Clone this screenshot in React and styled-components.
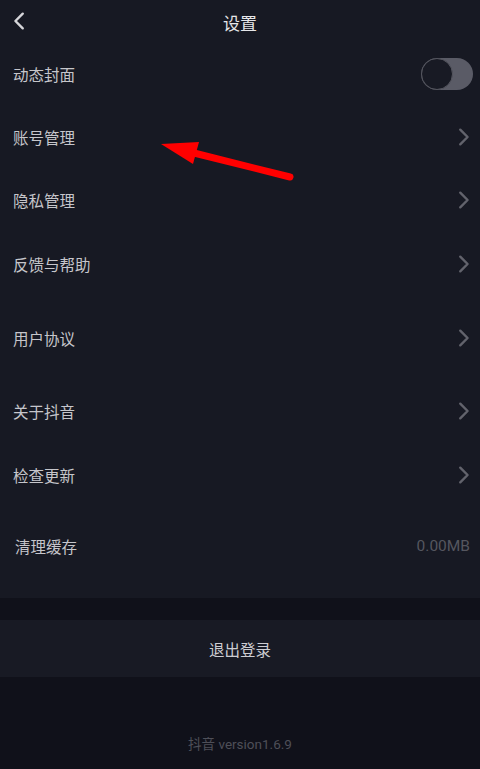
import React from "react";
import styled, { createGlobalStyle } from "styled-components";

const GlobalStyle = createGlobalStyle`
    html, body {
        margin: 0;
        padding: 0;
        background: #10111a;
    }
    body {
        font-family: "Noto Sans CJK SC", "Noto Sans", Roboto, sans-serif;
    }
`;

const items = [
    { label: "账号管理", h: 68 },
    { label: "隐私管理", h: 58 },
    { label: "反馈与帮助", h: 70 },
    { label: "用户协议", h: 78 },
    { label: "关于抖音", h: 68 },
    { label: "检查更新", h: 60 },
];

const Chevron = ({ left, color, size }) => (
    <svg width={size} height={size} viewBox="0 0 24 24" fill="none">
        <path
            d={left ? "M15 4 L7 12 L15 20" : "M9 4 L17 12 L9 20"}
            stroke={color}
            strokeWidth="2.6"
            strokeLinecap="round"
            strokeLinejoin="round"
        />
    </svg>
);

const App = () => {
    return (
        <Page>
            <GlobalStyle />
            <Panel>
                <Header>
                    <BackButton>
                        <Chevron left color="#d6d6da" size={22} />
                    </BackButton>
                    <Title>设置</Title>
                </Header>
                <Row $h={59}>
                    <Label>动态封面</Label>
                    <Toggle>
                        <Knob />
                    </Toggle>
                </Row>
                {items.map((item) => (
                    <Row key={item.label} $h={item.h}>
                        <Label>{item.label}</Label>
                        <Arrow>
                            <Chevron color="#62636c" size={22} />
                        </Arrow>
                    </Row>
                ))}
                <Row $h={81} $indent={15}>
                    <Label>清理缓存</Label>
                    <Value>0.00MB</Value>
                </Row>
            </Panel>
            <Logout>退出登录</Logout>
            <Footer>抖音 version1.6.9</Footer>
            <Annotation width="480" height="769" viewBox="0 0 480 769">
                <line
                    x1="290"
                    y1="177"
                    x2="190"
                    y2="152"
                    stroke="#ff0000"
                    strokeWidth="7"
                    strokeLinecap="round"
                />
                <polygon points="161,144 199,142 193,164" fill="#ff0000" />
            </Annotation>
        </Page>
    );
};

export default App;

const Page = styled.div`
    position: relative;
    width: 480px;
    height: 769px;
    overflow: hidden;
    background: #10111a;
`;

const Panel = styled.div`
    background: #171923;
    padding-bottom: 12px;
    margin-bottom: 22px;
`;

const Header = styled.div`
    position: relative;
    height: 44px;
    display: flex;
    align-items: center;
    justify-content: center;
`;

const BackButton = styled.div`
    position: absolute;
    left: 9px;
    top: 10px;
    display: flex;
`;

const Title = styled.div`
    font-size: 17px;
    color: #e6e6e9;
`;

const Row = styled.div`
    height: ${({ $h }) => $h}px;
    display: flex;
    align-items: center;
    justify-content: space-between;
    padding: 0 10px 0 ${({ $indent }) => $indent || 13}px;
`;

const Label = styled.span`
    font-size: 15.5px;
    color: #c6c6cb;
`;

const Arrow = styled.span`
    display: flex;
    margin-right: -4px;
`;

const Value = styled.span`
    font-family: Roboto, "Noto Sans", sans-serif;
    font-size: 15.5px;
    color: #55565f;
`;

const Toggle = styled.div`
    width: 52px;
    height: 32px;
    border-radius: 16px;
    background: #5a5b66;
    display: flex;
    align-items: center;
    margin-right: -3px;
`;

const Knob = styled.div`
    width: 30px;
    height: 30px;
    border-radius: 50%;
    background: #181a24;
    border: 1px solid #55565f;
`;

const Logout = styled.div`
    height: 57px;
    background: #181a24;
    display: flex;
    align-items: center;
    justify-content: center;
    font-size: 15.5px;
    color: #cdcdd2;
`;

const Footer = styled.div`
    padding-top: 56px;
    text-align: center;
    font-family: Roboto, "Noto Sans CJK SC", sans-serif;
    font-size: 13.5px;
    color: #4e4f58;
`;

const Annotation = styled.svg`
    position: absolute;
    left: 0;
    top: 0;
    pointer-events: none;
`;
